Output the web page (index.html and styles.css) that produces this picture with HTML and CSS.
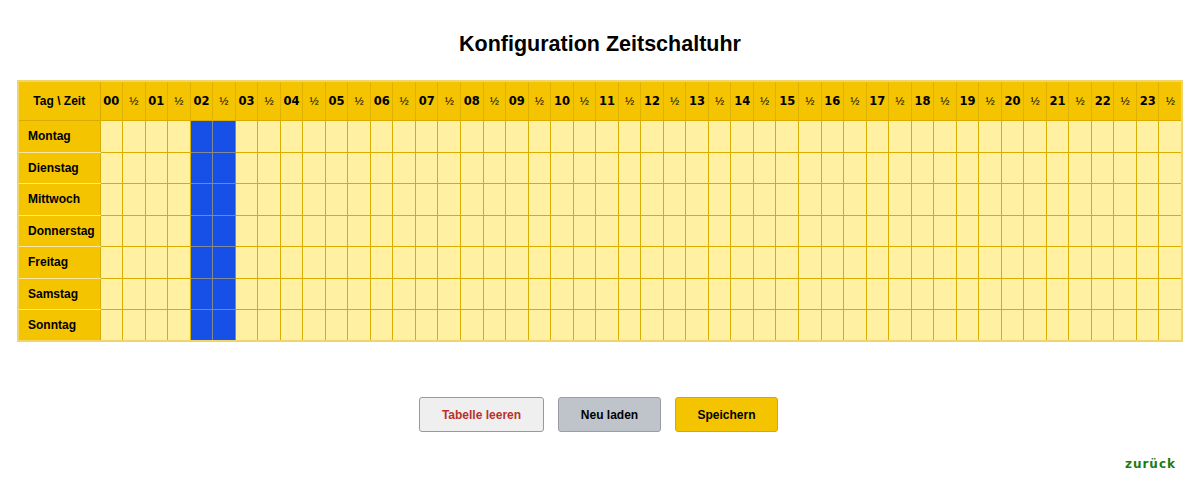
FILE: index.html
```html
<!DOCTYPE html>
<html lang="de">
<head>
<meta charset="utf-8">
<title>Konfiguration Zeitschaltuhr</title>
<link rel="stylesheet" href="styles.css">
</head>
<body>
<div class="page">
  <h1 class="title">Konfiguration Zeitschaltuhr</h1>
  <table class="grid">
    <colgroup>
      <col class="col-day">
    </colgroup>
    <thead>
      <tr class="head-row">
        <th class="corner">Tag \ Zeit</th>
        <th class="h">00</th><th class="half">½</th>
        <th class="h">01</th><th class="half">½</th>
        <th class="h">02</th><th class="half">½</th>
        <th class="h">03</th><th class="half">½</th>
        <th class="h">04</th><th class="half">½</th>
        <th class="h">05</th><th class="half">½</th>
        <th class="h">06</th><th class="half">½</th>
        <th class="h">07</th><th class="half">½</th>
        <th class="h">08</th><th class="half">½</th>
        <th class="h">09</th><th class="half">½</th>
        <th class="h">10</th><th class="half">½</th>
        <th class="h">11</th><th class="half">½</th>
        <th class="h">12</th><th class="half">½</th>
        <th class="h">13</th><th class="half">½</th>
        <th class="h">14</th><th class="half">½</th>
        <th class="h">15</th><th class="half">½</th>
        <th class="h">16</th><th class="half">½</th>
        <th class="h">17</th><th class="half">½</th>
        <th class="h">18</th><th class="half">½</th>
        <th class="h">19</th><th class="half">½</th>
        <th class="h">20</th><th class="half">½</th>
        <th class="h">21</th><th class="half">½</th>
        <th class="h">22</th><th class="half">½</th>
        <th class="h">23</th><th class="half">½</th>
      </tr>
    </thead>
    <tbody id="body"></tbody>
  </table>
  <div class="actions">
    <button class="btn btn-clear">Tabelle leeren</button>
    <button class="btn btn-reload">Neu laden</button>
    <button class="btn btn-save">Speichern</button>
  </div>
  <div class="back-row"><a class="back" href="#">zurück</a></div>
</div>
<script src="script.js"></script>
</body>
</html>
```
FILE: script.js
```js
(function () {
  var days = ["Montag", "Dienstag", "Mittwoch", "Donnerstag", "Freitag", "Samstag", "Sonntag"];
  var body = document.getElementById("body");
  days.forEach(function (d) {
    var tr = document.createElement("tr");
    tr.className = "day-row";
    var th = document.createElement("th");
    th.className = "day";
    th.textContent = d;
    tr.appendChild(th);
    for (var i = 0; i < 48; i++) {
      var td = document.createElement("td");
      td.className = (i === 4 || i === 5) ? "slot on" : "slot";
      tr.appendChild(td);
    }
    body.appendChild(tr);
  });
})();
```
FILE: styles.css
```css
html, body {
  margin: 0;
  padding: 0;
  background: #ffffff;
}
.page {
  padding: 0 16px 0 17px;
  font-family: "Liberation Sans", Arial, sans-serif;
}
.title {
  margin: 0;
  padding-top: 32px;
  height: 48px;
  box-sizing: border-box;
  text-align: center;
  font-size: 21.5px;
  font-weight: bold;
  color: #000;
  line-height: 24px;
}
.grid {
  border-collapse: collapse;
  table-layout: fixed;
  width: 1166px;
  border: 2px solid #f0d66a;
  margin-top: 32px;
}
.col-day {
  width: 82px;
}
.head-row th {
  height: 38px;
  background: #f4c400;
  border-right: 1px solid #e0b200;
  border-bottom: 1px solid #d9ab00;
  color: #000;
  padding: 0;
}
.corner {
  font-family: "Liberation Sans", Arial, sans-serif;
  font-size: 12px;
  font-weight: bold;
  border-right-color: #d9ab00 !important;
}
.h {
  font-family: "DejaVu Sans", Verdana, sans-serif;
  font-size: 11.5px;
  font-weight: bold;
  letter-spacing: 0;
}
.half {
  font-family: "Liberation Sans", Arial, sans-serif;
  font-size: 11px;
  font-weight: normal;
}
.day-row {
  height: 31.5px;
}
.day {
  background: #f4c400;
  text-align: left;
  padding: 0 0 0 9px;
  font-size: 12px;
  font-weight: bold;
  color: #000;
  border-bottom: 1px solid #f8e6a2;
  border-right: 1px solid #d9ab00;
}
.slot {
  background: #fff0a2;
  border: 1px solid #d8ae00;
  padding: 0;
}
.slot.on {
  background: #1650e6;
  border-top-color: #7f8a96;
  border-bottom-color: #7f8a96;
  border-left-color: #b8a040;
  border-right-color: #7f8a96;
}
.actions {
  display: flex;
  justify-content: center;
  gap: 14px;
  margin-top: 55px;
  padding-right: 3px;
}
.btn {
  height: 35px;
  border-radius: 3px;
  font-family: "Liberation Sans", Arial, sans-serif;
  font-size: 12px;
  font-weight: bold;
  padding: 0;
  cursor: pointer;
}
.btn-clear {
  width: 125px;
  background: #efefef;
  border: 1px solid #9a9a9a;
  color: #b8322c;
}
.btn-reload {
  width: 103px;
  background: #bfc4ca;
  border: 1px solid #9a9ea4;
  color: #000;
}
.btn-save {
  width: 103px;
  background: #f4c400;
  border: 1px solid #d4a800;
  color: #000;
}
.back-row {
  display: flex;
  justify-content: flex-end;
  margin-top: 25px;
  padding-right: 7px;
}
.back {
  font-family: "DejaVu Sans", Verdana, sans-serif;
  font-size: 12px;
  font-weight: bold;
  color: #1b7d12;
  text-decoration: none;
  letter-spacing: 1px;
}
```
